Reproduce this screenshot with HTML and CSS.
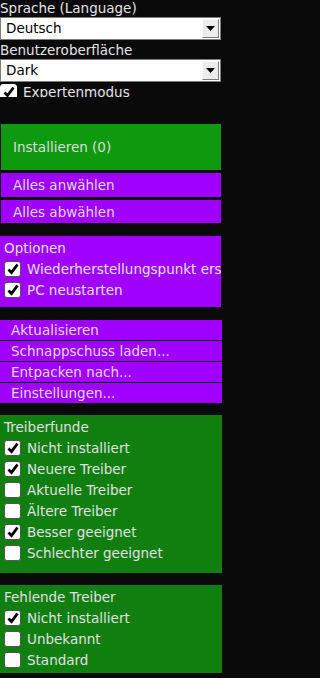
FILE: index.html
```html
<!DOCTYPE html>
<html lang="de">
<head>
<meta charset="utf-8">
<title>Treiber</title>
<link rel="stylesheet" href="styles.css">
</head>
<body>
<div class="top">
  <div class="label">Sprache (Language)</div>
  <div class="select"><span class="value">Deutsch</span><span class="arrow"><svg width="9" height="5" viewBox="0 0 9 5"><path d="M0 0H9L4.5 5Z" fill="#000"/></svg></span></div>
  <div class="label">Benutzeroberfläche</div>
  <div class="select"><span class="value">Dark</span><span class="arrow"><svg width="9" height="5" viewBox="0 0 9 5"><path d="M0 0H9L4.5 5Z" fill="#000"/></svg></span></div>
  <div class="check-row top-check"><span class="box checked"><svg width="14" height="14" viewBox="0 0 14 14"><path d="M2.5 7.5L5.5 10.5L11.5 2.5" fill="none" stroke="#000" stroke-width="2.8"/></svg></span><span>Expertenmodus</span></div>
</div>

<div class="btn install">Installieren (0)</div>
<div class="btn purple">Alles anwählen</div>
<div class="btn purple">Alles abwählen</div>

<div class="panel options">
  <div class="head">Optionen</div>
  <div class="check-row"><span class="box"><svg width="14" height="14" viewBox="0 0 14 14"><path d="M2.5 7.5L5.5 10.5L11.5 2.5" fill="none" stroke="#000" stroke-width="2.8"/></svg></span><span>Wiederherstellungspunkt erstellen</span></div>
  <div class="check-row"><span class="box"><svg width="14" height="14" viewBox="0 0 14 14"><path d="M2.5 7.5L5.5 10.5L11.5 2.5" fill="none" stroke="#000" stroke-width="2.8"/></svg></span><span>PC neustarten</span></div>
</div>

<div class="menu">
  <div class="item">Aktualisieren</div>
  <div class="item">Schnappschuss laden...</div>
  <div class="item">Entpacken nach...</div>
  <div class="item">Einstellungen...</div>
</div>

<div class="panel green found">
  <div class="head">Treiberfunde</div>
  <div class="check-row"><span class="box"><svg width="14" height="14" viewBox="0 0 14 14"><path d="M2.5 7.5L5.5 10.5L11.5 2.5" fill="none" stroke="#000" stroke-width="2.8"/></svg></span><span>Nicht installiert</span></div>
  <div class="check-row"><span class="box"><svg width="14" height="14" viewBox="0 0 14 14"><path d="M2.5 7.5L5.5 10.5L11.5 2.5" fill="none" stroke="#000" stroke-width="2.8"/></svg></span><span>Neuere Treiber</span></div>
  <div class="check-row"><span class="box"></span><span>Aktuelle Treiber</span></div>
  <div class="check-row"><span class="box"></span><span>Ältere Treiber</span></div>
  <div class="check-row"><span class="box"><svg width="14" height="14" viewBox="0 0 14 14"><path d="M2.5 7.5L5.5 10.5L11.5 2.5" fill="none" stroke="#000" stroke-width="2.8"/></svg></span><span>Besser geeignet</span></div>
  <div class="check-row"><span class="box"></span><span>Schlechter geeignet</span></div>
</div>

<div class="panel green missing">
  <div class="head">Fehlende Treiber</div>
  <div class="check-row"><span class="box"><svg width="14" height="14" viewBox="0 0 14 14"><path d="M2.5 7.5L5.5 10.5L11.5 2.5" fill="none" stroke="#000" stroke-width="2.8"/></svg></span><span>Nicht installiert</span></div>
  <div class="check-row"><span class="box"></span><span>Unbekannt</span></div>
  <div class="check-row"><span class="box"></span><span>Standard</span></div>
</div>
</body>
</html>
```

FILE: styles.css
```css
html, body {
  margin: 0;
  padding: 0;
  background: #0a0a0a;
}
body {
  width: 222px;
  height: 678px;
  overflow: hidden;
  font-family: "DejaVu Sans", Verdana, sans-serif;
  font-size: 13.5px;
  color: #e4e4e4;
}
.top {
  height: 97px;
  overflow: hidden;
}
.label {
  height: 17px;
  line-height: 17px;
  white-space: nowrap;
}
.select {
  box-sizing: border-box;
  width: 221px;
  height: 23px;
  margin-bottom: 2px;
  background: #fff;
  border: 1px solid #7c7c7c;
  display: flex;
  align-items: stretch;
  color: #000;
}
.select .value {
  flex: 1;
  padding-left: 5px;
  line-height: 21px;
}
.select .arrow {
  box-sizing: border-box;
  width: 17px;
  margin: 1px 1px 1px 0;
  background: #ececec;
  border-top: 1px solid #fafafa;
  border-left: 1px solid #fafafa;
  border-right: 1px solid #7a7a7a;
  border-bottom: 1px solid #7a7a7a;
  display: flex;
  align-items: center;
  justify-content: center;
}
.check-row {
  display: flex;
  align-items: center;
  gap: 6px;
  height: 21px;
  white-space: nowrap;
}
.top-check {
  height: 16px;
  align-items: flex-start;
}
.top-check .box {
  border-color: #ffffff;
}
.box {
  box-sizing: border-box;
  flex: none;
  width: 17px;
  height: 16px;
  background: #fff;
  border: 1px solid #555;
  border-radius: 3px;
  display: flex;
  align-items: center;
  justify-content: center;
}
.btn {
  box-sizing: border-box;
  margin-left: 1px;
  width: 220px;
  padding-left: 12px;
  display: flex;
  align-items: center;
  color: #dcdcdc;
  white-space: nowrap;
}
.install {
  margin-top: 27px;
  height: 46px;
  background: #0e990e;
}
.purple {
  margin-top: 3px;
  height: 24px;
  background: #a000fe;
}
.purple + .purple {
  height: 23px;
}
.panel {
  box-sizing: border-box;
  overflow: hidden;
  padding: 4px 0 0 4px;
  white-space: nowrap;
  color: #e0e0e0;
}
.panel .head {
  height: 18px;
  line-height: 17px;
}
.options {
  margin-top: 13px;
  width: 221px;
  height: 71px;
  background: #a000fe;
}
.menu {
  margin-top: 13px;
  width: 222px;
  display: flex;
  flex-direction: column;
  gap: 1px;
  background: #0a0a0a;
}
.menu .item {
  height: 20px;
  line-height: 20px;
  padding-left: 11px;
  background: #a000fe;
  color: #e0d8f0;
  white-space: nowrap;
}
.green {
  width: 222px;
  background: #107f10;
}
.found {
  margin-top: 12px;
  height: 158px;
}
.missing {
  margin-top: 12px;
  height: 88px;
}
```
